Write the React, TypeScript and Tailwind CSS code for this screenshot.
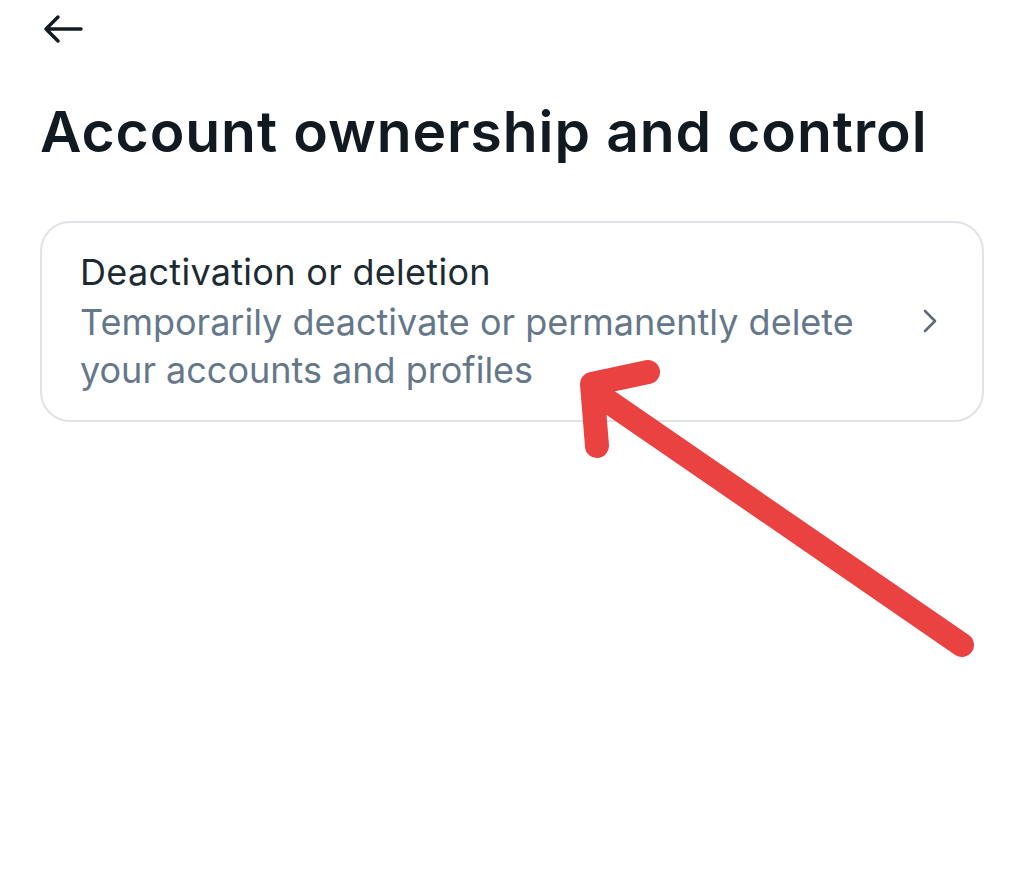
import React from "react";

export default function App() {
  return (
    <div className="relative min-h-[884px] w-[1024px] bg-white font-['Inter',sans-serif] text-[#1c2b33]">
      <div className="pl-[43px] pt-[14px]">
        <svg width="40" height="30" viewBox="0 0 40 30" fill="none">
          <path d="M38 15H3M15 3L3 15l12 12" stroke="#141c22" strokeWidth="3.5" strokeLinecap="round" strokeLinejoin="round" />
        </svg>
      </div>
      <h1 className="mt-[53px] pl-[40px] text-[57px] font-semibold leading-[70px] tracking-[0.9px] text-[#121a21]">
        Account ownership and control
      </h1>
      <div className="mx-[40px] mt-[54px] flex items-center rounded-[30px] border-2 border-[#dfe3e8] pt-[25px] pb-[26px] pl-[38px] pr-[44px]">
        <div className="flex-1">
          <div className="text-[36px] leading-[48px] tracking-[0.3px] text-[#1c2b33]">Deactivation or deletion</div>
          <div className="mt-[2px] text-[36px] leading-[48px] text-[#65778a]">
            Temporarily deactivate or permanently delete
            <br />
            your accounts and profiles
          </div>
        </div>
        <svg width="16" height="26" viewBox="0 0 16 26" fill="none">
          <path d="M3 3l10 10L3 23" stroke="#5f6b7a" strokeWidth="2.6" strokeLinecap="round" strokeLinejoin="round" />
        </svg>
      </div>
      <svg className="pointer-events-none absolute left-0 top-0" width="1024" height="884" viewBox="0 0 1024 884" fill="none">
        <path d="M962 645L596 393M648 372L592 384L597 446" stroke="#ea4141" strokeWidth="24" strokeLinecap="round" strokeLinejoin="round" />
      </svg>
    </div>
  );
}
